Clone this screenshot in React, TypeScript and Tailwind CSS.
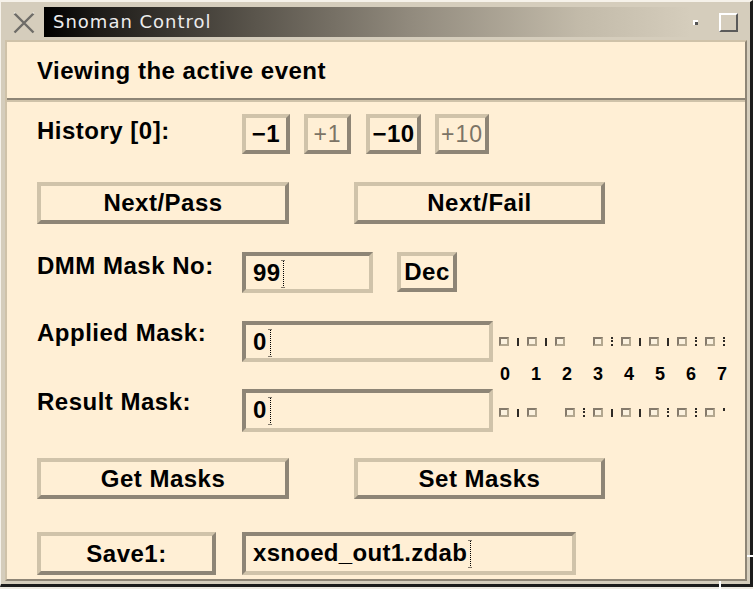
import type { ReactNode } from 'react';

const raised =
  'border-4 border-t-[#d0c3aa] border-l-[#d0c3aa] border-r-[#8e8576] border-b-[#8e8576] bg-[#ffefd5] flex items-center justify-center';
const sunken =
  'border-4 border-t-[#8e8576] border-l-[#8e8576] border-r-[#d0c3aa] border-b-[#d0c3aa] bg-[#ffefd5] flex items-start pl-[7px] pt-[5px]';
const label = 'text-[24px] leading-[24px] font-bold tracking-[0.5px] text-black';

function Button({ className, children, disabled }: { className: string; children: ReactNode; disabled?: boolean }) {
  return (
    <div className={`${raised} ${className}`}>
      <span
        className={
          disabled
            ? 'text-[23px] leading-[24px] font-normal text-[#7c7466] tracking-[1px]'
            : 'text-[24px] leading-[24px] font-bold tracking-[0.5px] text-black'
        }
      >
        {children}
      </span>
    </div>
  );
}

function Cursor() {
  return (
    <svg width="5" height="28" viewBox="0 0 5 28" className="-mt-[1px] ml-[1px] shrink-0">
      <line x1="2.5" y1="1" x2="2.5" y2="27" stroke="#000" strokeWidth="1" strokeDasharray="1 1" />
      <path d="M0.5 0.5h4M0.5 27.5h4" stroke="#000" strokeWidth="1" strokeDasharray="1 1" />
    </svg>
  );
}

function Field({ className, value }: { className: string; value: string }) {
  return (
    <div className={`${sunken} ${className}`}>
      <span className="text-[24px] leading-[24px] font-bold tracking-[0.3px] text-black">{value}</span>
      <Cursor />
    </div>
  );
}

function Toggle({ t }: { t: string }) {
  if (t === 's')
    return (
      <div className="w-[10px] h-[9px] shrink-0 border-2 border-t-[#857a6b] border-l-[#857a6b] border-r-[#b3a78f] border-b-[#b3a78f] bg-[#fbf1de]" />
    );
  if (t === 'b') return <div className="w-[2px] h-[8px] shrink-0 mx-[8px] bg-[#2e2a26]" />;
  if (t === 'd') return <div className="w-[2px] h-[9px] shrink-0 mx-[8px] border-l-2 border-dotted border-[#2e2a26]" />;
  if (t === 't') return <div className="w-[2px] h-[3px] shrink-0 mx-[8px] self-start bg-[#2e2a26]" />;
  return <div className="w-[28px] shrink-0" />;
}

const topBits = ['s', 'b', 's', 'b', 's', 'g', 's', 'd', 's', 'b', 's', 'b', 's', 'd', 's', 'd'];
const bottomBits = ['s', 'b', 's', 'g', 's', 'd', 's', 'b', 's', 'b', 's', 'd', 's', 'd', 's', 't'];
const digits = ['0', '1', '2', '3', '4', '5', '6', '7'];

export default function App() {
  return (
    <div className="relative w-[753px] h-[589px] overflow-hidden bg-[#eeeae2] font-['Liberation_Sans',Arial,sans-serif]">
      <div className="w-[753px] h-[587px] flex flex-col bg-[#d5cdbc] border-t-2 border-l border-r-[3px] border-b-[3px] border-t-[#f6f2ea] border-l-[#f6f2ea] border-r-[#1c1c1c] border-b-[#1c1c1c]">
        {/* title bar */}
        <div className="flex h-[36px] shrink-0 pr-[3px]">
          <div className="w-[43px] shrink-0 flex items-start pt-[10px] pl-[12px]">
            <svg width="22" height="22" viewBox="0 0 22 22">
              <path d="M1.5 1.5L20.5 20.5M20.5 1.5L1.5 20.5" stroke="#6e6c68" strokeWidth="2.4" />
              <path d="M1 1L2.5 1M19.5 1L21 1" stroke="#f4f2ee" strokeWidth="1" />
            </svg>
          </div>
          <div className="flex-1 mt-[5px] h-[30px] flex items-center justify-between pl-[9px] pr-[9px] bg-[linear-gradient(to_right,#000000_0%,#1e1c19_8%,#5a554c_30%,#918a7d_52%,#c2baa9_76%,#d5cdbc_92%)]">
            <span className="font-['DejaVu_Sans',sans-serif] text-[18px] leading-[18px] tracking-[1px] text-[#ececec]">
              Snoman Control
            </span>
            <div className="flex items-center">
              <div className="w-[5px] h-[5px] border-t-2 border-l-2 border-t-white border-l-white bg-[#555555]" />
              <div className="ml-[21px] w-[19px] h-[19px] border-2 border-t-white border-l-white border-r-[#5a5a5a] border-b-[#5a5a5a]" />
            </div>
          </div>
        </div>

        {/* content */}
        <div className="mt-[2px] ml-[4px] mr-[3px] h-[541px] flex flex-col border-2 border-t-[#cfc2a9] border-l-[#cfc2a9] border-r-[#8e8576] border-b-[#8e8576] bg-[#ffefd5]">
          <div className="h-[56px] shrink-0 pl-[30px] pt-[17px]">
            <div className={label}>Viewing the active event</div>
          </div>
          <div className="h-[2px] shrink-0 bg-[#8e8576]" />
          <div className="h-[2px] shrink-0 bg-[#cfc2a9]" />

          <div className="flex flex-col pl-[30px] pt-[12px]">
            {/* history */}
            <div className="flex items-start h-[40px]">
              <div className={`w-[205px] mt-[5px] ${label}`}>History [0]:</div>
              <Button className="w-[48px] h-[40px]">−1</Button>
              <Button className="w-[47px] h-[40px] ml-[14px]" disabled>+1</Button>
              <Button className="w-[55px] h-[40px] ml-[15px]">−10</Button>
              <Button className="w-[54px] h-[40px] ml-[14px]" disabled>+10</Button>
            </div>

            <div className="flex mt-[28px] h-[42px]">
              <Button className="w-[252px] h-[42px]">Next/Pass</Button>
              <Button className="w-[251px] h-[42px] ml-[65px]">Next/Fail</Button>
            </div>

            <div className="flex items-start mt-[28px] h-[41px]">
              <div className={`w-[205px] mt-[2px] ${label}`}>DMM Mask No:</div>
              <Field className="w-[131px] h-[41px]" value="99" />
              <Button className="w-[60px] h-[40px] ml-[24px]">Dec</Button>
            </div>

            <div className="flex mt-[28px] h-[111px]">
              <div className="flex flex-col shrink-0">
                <div className="flex items-start h-[41px]">
                  <div className={`w-[205px] ${label}`}>Applied Mask:</div>
                  <Field className="w-[251px] h-[41px]" value="0" />
                </div>
                <div className="flex items-start h-[43px] mt-[27px]">
                  <div className={`w-[205px] mt-[1px] ${label}`}>Result Mask:</div>
                  <Field className="w-[251px] h-[43px]" value="0" />
                </div>
              </div>
              <div className="flex-1 overflow-hidden ml-[4px] pl-[2px] flex flex-col">
                <div className="flex items-center mt-[16px] h-[9px]">
                  {topBits.map((t, i) => (
                    <Toggle key={i} t={t} />
                  ))}
                </div>
                <div className="flex mt-[19px] h-[18px]">
                  {digits.map((d) => (
                    <div key={d} className="w-[31px] shrink-0 pl-[1px] text-[18px] leading-[18px] font-bold text-black">
                      {d}
                    </div>
                  ))}
                </div>
                <div className="flex items-center mt-[25px] h-[9px]">
                  {bottomBits.map((t, i) => (
                    <Toggle key={i} t={t} />
                  ))}
                </div>
              </div>
            </div>

            <div className="flex mt-[26px] h-[41px]">
              <Button className="w-[252px] h-[41px]">Get Masks</Button>
              <Button className="w-[251px] h-[41px] ml-[65px]">Set Masks</Button>
            </div>

            <div className="flex mt-[33px] h-[43px]">
              <Button className="w-[179px] h-[43px]">Save1:</Button>
              <Field className="w-[334px] h-[43px] ml-[26px]" value="xsnoed_out1.zdab" />
            </div>
          </div>
        </div>
      </div>

      {/* resize corner marks */}
      <div className="absolute left-[747px] top-[555px] w-[6px] h-[2px] bg-white" />
      <div className="absolute left-[719px] top-[581px] w-[2px] h-[8px] bg-white" />
    </div>
  );
}
